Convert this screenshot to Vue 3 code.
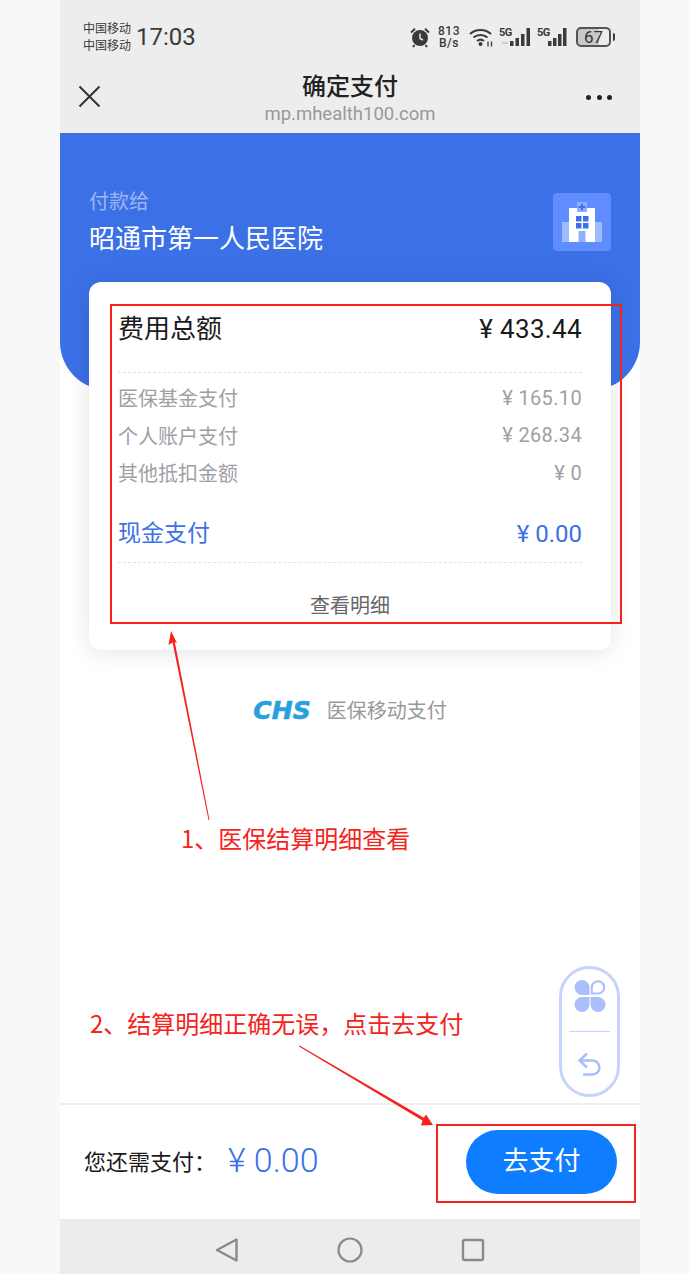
<script setup>
const rows = [
  { label: '医保基金支付', value: '¥ 165.10' },
  { label: '个人账户支付', value: '¥ 268.34' },
  { label: '其他抵扣金额', value: '¥ 0' },
]
</script>

<template>
  <div class="stage">
    <div class="phone">
      <div class="status">
        <div class="carrier"><span>中国移动</span><span>中国移动</span></div>
        <div class="clock">17:03</div>
        <div class="status-right">
          <svg class="alarm" width="22" height="22" viewBox="0 0 22 22">
            <circle cx="11" cy="12" r="8" fill="#3a3a3a" />
            <path d="M11 7.5V12.5L14 14" stroke="#eee" stroke-width="1.4" fill="none" />
            <path d="M2 6.5 6 2.8M20 6.5 16 2.8M5.5 19 4 21M16.5 19 18 21" stroke="#3a3a3a" stroke-width="2" fill="none" />
          </svg>
          <div class="speed"><span>813</span><span>B/s</span></div>
          <svg class="wifi" width="25" height="20" viewBox="0 0 25 20">
            <path d="M1 7C6.500 1.500 16.500 1.500 22 7M4.500 10.500C8.500 7 14.500 7 18.500 10.500M8 14C10 12.400 13 12.400 15 14" stroke="#3a3a3a" stroke-width="2" fill="none" />
            <circle cx="11.500" cy="17" r="2" fill="#3a3a3a" />
            <path d="M19 14.500v5M22.500 14.500v5" stroke="#3a3a3a" stroke-width="1.300" />
          </svg>
          <div class="signal">
            <span class="five-g">5G</span>
            <svg width="21" height="20" viewBox="0 0 21 20"><path d="M-8 15h6v2h-6z" fill="#ccc" /><path d="M0 14h3.500v5H0zM5.500 11H9v8H5.500zM11 7h3.500v12H11zM16.500 1H20v18h-3.500z" fill="#3a3a3a" /></svg>
          </div>
          <div class="signal signal-two">
            <span class="five-g">5G</span>
            <svg width="20" height="20" viewBox="0 0 20 20"><path d="M0 14h3.500v5H0zM5 11h3.500v8H5zM10 7h3.500v12H10zM15 1h3.500v18H15z" fill="#3a3a3a" /></svg>
          </div>
          <div class="battery"><span>67</span></div>
          <div class="battery-tip"></div>
        </div>
      </div>

      <div class="navbar">
        <svg class="close" width="24" height="24" viewBox="0 0 24 24">
          <path d="M1.500 1.500 21.500 21.500M21.500 1.500 1.500 21.500" stroke="#333" stroke-width="2" fill="none" />
        </svg>
        <div class="nav-title">
          <div class="title">确定支付</div>
          <div class="url">mp.mhealth100.com</div>
        </div>
        <div class="dots"><i></i><i></i><i></i></div>
      </div>

      <div class="content">
        <div class="hero">
          <div class="payee">
            <div class="payee-text">
              <div class="pay-to">付款给</div>
              <div class="hospital">昭通市第一人民医院</div>
            </div>
            <div class="hospital-icon">
              <svg width="58" height="58" viewBox="0 0 58 58">
                <rect x="9" y="29" width="40" height="20" fill="#fff" opacity=".4" />
                <rect x="16" y="15" width="26" height="34" fill="#fff" />
                <rect x="24" y="9" width="10" height="10" fill="#8fadff" />
                <path d="M29 10.500v7M25.500 14h7" stroke="#3c70e6" stroke-width="1.800" />
                <path d="M23 23h5.500v5.500H23zM30 23h5.500v5.500H30zM23 30h5.500v5.500H23zM30 30h5.500v5.500H30z" fill="#3c70e6" />
                <rect x="25.500" y="38" width="7" height="11" fill="#8fb0ff" />
              </svg>
            </div>
          </div>
        </div>

        <div class="card">
          <div class="total">
            <span>费用总额</span>
            <span class="num">¥ 433.44</span>
          </div>
          <div class="rows">
            <div v-for="r in rows" :key="r.label" class="row">
              <span>{{ r.label }}</span>
              <span class="num">{{ r.value }}</span>
            </div>
          </div>
          <div class="cash">
            <span>现金支付</span>
            <span class="cash-num">¥ 0.00</span>
          </div>
          <div class="detail">查看明细</div>
        </div>

        <div class="chs">
          <span class="chs-logo">CHS</span>
          <span class="chs-text">医保移动支付</span>
        </div>

        <div class="float-wrap">
          <div class="float-btn">
            <svg width="34" height="34" viewBox="0 0 34 34">
              <path d="M9 1a7.500 7.500 0 0 1 7.500 7.500V16H9A7.500 7.500 0 0 1 9 1zM9 33a7.500 7.500 0 0 0 7.500-7.500V18H9a7.500 7.500 0 0 0 0 15zM25 33a7.500 7.500 0 0 1-7.500-7.500V18H25a7.500 7.500 0 0 1 0 15z" fill="#a9bffb" />
              <path d="M25 2.200a6.200 6.200 0 0 1 0 12.400H18.800V8.400A6.200 6.200 0 0 1 25 2.200z" fill="none" stroke="#a9bffb" stroke-width="2" />
            </svg>
            <div class="float-line"></div>
            <svg width="26" height="26" viewBox="0 0 26 26">
              <path d="M10 1.500 2.500 8.500l7.500 7M3 8.500H15.500a6.500 6.500 0 0 1 0 14H6" fill="none" stroke="#a9bffb" stroke-width="2.500" />
            </svg>
          </div>
        </div>

        <div class="paybar">
          <div class="due">
            <span>您还需支付：</span>
            <span class="due-amount">¥ 0.00</span>
          </div>
          <div class="pay-btn">去支付</div>
        </div>
      </div>

      <div class="sysnav">
        <svg width="24" height="26" viewBox="0 0 24 26">
          <path d="M21.500 2.500V23.500L2 13Z" fill="none" stroke="#8a8a8a" stroke-width="2.400" stroke-linejoin="round" />
        </svg>
        <svg width="26" height="26" viewBox="0 0 26 26">
          <circle cx="13" cy="13" r="11.500" fill="none" stroke="#8a8a8a" stroke-width="2.200" />
        </svg>
        <svg width="24" height="24" viewBox="0 0 24 24">
          <rect x="2" y="2" width="20" height="20" rx="1.500" fill="none" stroke="#8a8a8a" stroke-width="2.400" />
        </svg>
      </div>
    </div>

    <!-- annotations drawn over the screenshot -->
    <div class="mark mark-a"></div>
    <div class="mark mark-b"></div>
    <div class="note note-a">1、医保结算明细查看</div>
    <div class="note note-b">2、结算明细正确无误，点击去支付</div>
    <svg class="arrows" width="689" height="1274" viewBox="0 0 689 1274">
      <path d="M171 631 177 643 174.800 642 209.500 820 208.500 820 172.600 642.500 168.500 645Z" fill="#f5231c" />
      <path d="M433 1125 421 1125.500 422.500 1120.500 299 1046.500 299.500 1045.500 423.800 1117.800 426 1114.500Z" fill="#f5231c" />
    </svg>
  </div>
</template>

<style>
html, body {
  margin: 0;
  background: #f8f8f8;
}
</style>

<style scoped>
.stage {
  position: relative;
  width: 689px;
  height: 1274px;
  padding-left: 60px;
  box-sizing: border-box;
  overflow: hidden;
  background: #f8f8f8;
  font-family: Roboto, "Noto Sans CJK SC", sans-serif;
}

.phone {
  width: 580px;
  height: 1274px;
  display: flex;
  flex-direction: column;
  background: #fff;
}

.status {
  height: 66px;
  flex: none;
  display: flex;
  align-items: center;
  padding: 8px 25px 0 23px;
  box-sizing: border-box;
  background: #ededed;
  color: #3a3a3a;
}

.carrier {
  display: flex;
  flex-direction: column;
  padding-top: 1px;
  font-size: 12px;
  line-height: 17px;
}

.clock {
  margin-left: 5px;
  font-size: 24px;
}

.status-right {
  margin-left: auto;
  display: flex;
  align-items: center;
}

.speed {
  margin-left: 7px;
  display: flex;
  flex-direction: column;
  align-items: center;
  font-size: 12px;
  font-weight: 500;
  line-height: 12px;
  letter-spacing: .5px;
}

.wifi {
  margin-left: 9px;
}

.signal {
  margin-left: 5px;
  display: flex;
  align-items: flex-start;
}

.signal svg {
  margin-left: -1px;
  overflow: visible;
}

.signal-two {
  margin-left: 6px;
}

.five-g {
  width: 12px;
  font-size: 11px;
  font-weight: 700;
  line-height: 12px;
  letter-spacing: -.5px;
}

.battery {
  width: 35px;
  height: 20px;
  box-sizing: border-box;
  border: 2px solid #555;
  border-radius: 5px;
  margin-left: 8px;
  background: linear-gradient(90deg, #c8c8c8 67%, transparent 67%);
  display: flex;
  align-items: center;
  justify-content: center;
  font-size: 17px;
  color: #333;
}

.battery-tip {
  width: 2px;
  height: 8px;
  margin-left: 2px;
  border-radius: 0 2px 2px 0;
  background: #3a3a3a;
}

.navbar {
  height: 67px;
  flex: none;
  display: grid;
  grid-template-columns: 1fr auto 1fr;
  align-items: center;
  padding: 0 28px;
  box-sizing: border-box;
  background: #ededed;
}

.close {
  margin: 0 0 5px -10px;
}

.nav-title {
  text-align: center;
  margin-top: -2px;
}

.title {
  font-size: 24px;
  font-weight: 500;
  line-height: 30px;
  color: #222;
}

.url {
  font-size: 18.500px;
  line-height: 24px;
  color: #999;
}

.dots {
  justify-self: end;
  display: flex;
  gap: 5.500px;
  margin-bottom: 5px;
}

.dots i {
  width: 5px;
  height: 5px;
  border-radius: 50%;
  background: #222;
}

.content {
  flex: 1;
  position: relative;
  display: flex;
  flex-direction: column;
}

.hero {
  height: 257px;
  flex: none;
  box-sizing: border-box;
  padding: 53px 29px 0;
  background: #3c70e6;
  border-radius: 0 0 48px 48px;
}

.payee {
  display: flex;
  justify-content: space-between;
  align-items: flex-start;
  padding-top: 7px;
}

.payee-text {
  margin-top: -6px;
}

.pay-to {
  font-size: 20px;
  line-height: 30px;
  color: rgba(255, 255, 255, .5);
}

.hospital {
  margin-top: 4px;
  font-size: 26px;
  line-height: 36px;
  color: #fff;
}

.hospital-icon {
  width: 58px;
  height: 58px;
  border-radius: 4px;
  background: #5f8cff;
  display: flex;
}

.card {
  margin: -108px 29px 0;
  height: 368px;
  flex: none;
  box-sizing: border-box;
  padding: 0 29px;
  background: #fff;
  border-radius: 12px;
  box-shadow: 0 2px 24px rgba(0, 0, 0, .11);
  position: relative;
}

.total {
  height: 91px;
  box-sizing: border-box;
  padding-top: 29px;
  display: flex;
  justify-content: space-between;
  font-size: 26px;
  line-height: 36px;
  color: #1a1a1a;
  border-bottom: 1px dashed #e2e2e2;
}

.num {
  letter-spacing: .35px;
}

.rows {
  padding-top: 6px;
}

.row {
  height: 37.500px;
  display: flex;
  justify-content: space-between;
  align-items: center;
  font-size: 20px;
  color: #a0a0a5;
}

.cash {
  height: 71px;
  box-sizing: border-box;
  padding-top: 25px;
  display: flex;
  justify-content: space-between;
  font-size: 23px;
  line-height: 34px;
  color: #3c70e6;
  border-bottom: 1px dashed #e2e2e2;
}

.cash-num {
  font-size: 24px;
}

.detail {
  padding-top: 28px;
  text-align: center;
  font-size: 20px;
  line-height: 30px;
  color: #666;
}

.chs {
  margin-top: 46px;
  display: flex;
  justify-content: center;
  align-items: center;
  gap: 16px;
}

.chs-logo {
  font-family: "DejaVu Sans", sans-serif;
  font-size: 25px;
  font-weight: 700;
  font-style: italic;
  line-height: 30px;
  color: #2a9fe0;
  -webkit-text-stroke: .6px #2a9fe0;
}

.chs-text {
  font-size: 20px;
  line-height: 30px;
  color: #999;
}

.float-wrap {
  margin-top: auto;
  display: flex;
  justify-content: flex-end;
  padding: 0 20px 6px 0;
}

.float-btn {
  width: 61px;
  height: 131px;
  box-sizing: border-box;
  padding-top: 10px;
  border: 3px solid #c6d4fb;
  border-radius: 31px;
  background: #fff;
  display: flex;
  flex-direction: column;
  align-items: center;
}

.float-line {
  width: 41px;
  height: 1px;
  flex: none;
  margin: 18px 0 20px;
  background: #c6d4fb;
}

.paybar {
  height: 116px;
  flex: none;
  box-sizing: border-box;
  padding: 0 23px 0 24px;
  border-top: 2px solid #eee;
  display: flex;
  justify-content: space-between;
  align-items: center;
  background: #fff;
}

.due {
  display: flex;
  align-items: center;
  gap: 12px;
  margin-bottom: 4px;
  font-size: 22px;
  color: #1a1a1a;
}

.due-amount {
  font-size: 34px;
  font-weight: 300;
  color: #3c70e6;
}

.pay-btn {
  width: 151px;
  height: 64px;
  border-radius: 32px;
  background: #0f7dff;
  color: #fff;
  font-size: 26px;
  line-height: 62px;
  text-align: center;
}

.sysnav {
  height: 55px;
  flex: none;
  box-sizing: border-box;
  display: flex;
  justify-content: space-between;
  align-items: center;
  padding: 7px 155px 0;
  background: #ececec;
}

.mark {
  position: absolute;
  box-sizing: border-box;
  border: 2px solid #f5231c;
}

.mark-a {
  left: 110px;
  top: 304px;
  width: 512px;
  height: 320px;
}

.mark-b {
  left: 436px;
  top: 1124px;
  width: 200px;
  height: 79px;
}

.note {
  position: absolute;
  font-family: "Noto Sans CJK SC", sans-serif;
  font-size: 24px;
  line-height: 34px;
  color: #f5231c;
  white-space: nowrap;
}

.note-a {
  left: 181px;
  top: 821px;
}

.note-b {
  left: 90px;
  top: 1006px;
}

.arrows {
  position: absolute;
  left: 0;
  top: 0;
  pointer-events: none;
}
</style>
